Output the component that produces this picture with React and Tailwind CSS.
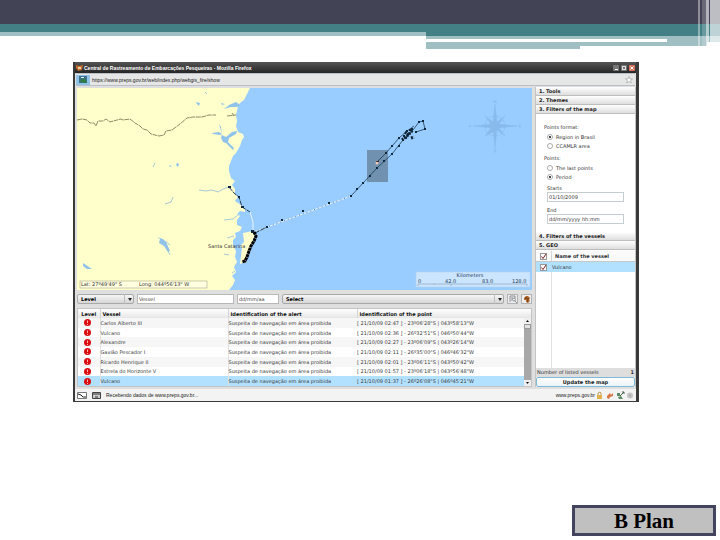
import { useState } from 'react';

const alerts = [
  { vessel: 'Carlos Alberto III', point: '[ 21/10/09 02:47 ] - 23º06\'28"S | 043º58\'13"W' },
  { vessel: 'Vulcano', point: '[ 21/10/09 02:36 ] - 26º32\'51"S | 046º50\'44"W' },
  { vessel: 'Alexandre', point: '[ 21/10/09 02:27 ] - 23º06\'09"S | 043º26\'14"W' },
  { vessel: 'Gavião Pescador I', point: '[ 21/10/09 02:11 ] - 26º35\'00"S | 046º46\'32"W' },
  { vessel: 'Ricardo Henrique II', point: '[ 21/10/09 02:01 ] - 23º06\'11"S | 043º50\'42"W' },
  { vessel: 'Estrela do Horizonte V', point: '[ 21/10/09 01:57 ] - 23º06\'18"S | 043º56\'48"W' },
  { vessel: 'Vulcano', point: '[ 21/10/09 01:37 ] - 26º26\'08"S | 046º45\'21"W' },
];

// reported positions, north-east part of the track
const track = [
  [274, 108], [280, 101], [286, 95], [293, 88], [300, 80], [307, 73],
  [315, 66], [322, 58], [326, 52], [329, 50], [327, 48], [331, 46],
  [333, 42], [335, 41], [330, 43], [322, 50], [315, 58], [309, 65],
  [300, 74], [342, 34], [346, 33], [348, 41], [339, 44],
  [190, 139], [205, 132], [226, 123], [252, 115],
];

function Header() {
  return (
    <header className="relative h-[49px]">
      <div className="h-6 bg-[#424456]" />
      <div className="h-3 bg-[#438086] flex flex-col justify-end">
        <div className="h-1 w-[426px] bg-[#a0bfc2]" />
      </div>
      <div className="ml-[426px]">
        <div className="h-[3px] bg-[#a0bfc2]" />
        <div className="h-[3px] flex justify-end">
          <div className="w-[53px] bg-[#a0bfc2]" />
        </div>
        <div className="h-1 mr-[13px] bg-[#a0bfc2]" />
        <div className="h-[3px] w-[154px] bg-[#a0bfc2]" />
      </div>
      {/* translucent stripes at the right edge */}
      <div className="absolute right-0 top-0 h-[49px] flex">
        <div className="w-[2px] h-[46px] bg-white/40" />
        <div className="w-[2px] h-[46px]" />
        <div className="w-[4px] h-[46px] bg-white/20" />
        <div className="w-[3px] bg-white/60" />
        <div className="w-px" />
        <div className="w-[10px] bg-white/65" />
      </div>
    </header>
  );
}

function Compass() {
  return (
    <g transform="translate(418 38)" fill="#88bbec" stroke="#88bbec">
      <circle r="10" fill="none" strokeWidth=".8" strokeDasharray="3 1" />
      <path d="M0-22 2-3 0 0-2-3ZM0 22 2 3 0 0-2 3ZM-22 0-3-2 0 0-3 2ZM22 0 3-2 0 0 3 2Z" strokeWidth=".4" />
      <path d="M-10-10-2-4 0 0-4-2ZM10-10 2-4 0 0 4-2ZM-10 10 2 4 0 0-4 2ZM10 10 2 4 0 0 4 2Z" strokeWidth=".4" />
      <path d="M-1-23v-3l2 3v-3M1 23h-2v1.500h2V26h-2M24-1v2h2M24-1h2M24 0h1.500M-26-1l.5 2 .5-1 .5 1 .5-2" fill="none" strokeWidth=".7" />
    </g>
  );
}

function VesselMap() {
  return (
    <svg
      className="block w-full h-[202px] bg-[#99ccff]"
      viewBox="0 0 455 202"
      preserveAspectRatio="xMinYMin slice"
      role="img"
      aria-label="Map"
      fontFamily="'DejaVu Sans', sans-serif"
    >
      {/* mainland */}
      <path
        fill="#ffffcc"
        d="M0 0H173L170 6 167 12 163 15 161 18 160 23 159 27 160 33 159 38 161 44 166 46 167 49 165 52 163 58 159 65 156 68 154 73 152 78 152 83 154 90 158 93 155 97 158 101 158 106 161 109 158 113 164 117 168 121 168 124 163 123 160 126 163 128 160 132 160 137 165 139 163 143 158 145 159 149 156 152 156 157 159 163 158 169 160 174 157 179 159 184 155 188 158 192 156 197 152 202H0Z"
      />
      {/* island */}
      <path fill="#ffffcc" d="M166 145 171 144 176 143 178 147 176 153 174 158 171 165 168 174 163 176 164 168 165 160 163 158 167 154Z" />
      {/* bays and lakes */}
      <g fill="#91c3ea">
        <path d="M152 17 159 14 163 17 160 19 154 19 147 21 151 18ZM144 15l4 1-3 1ZM119 14l4 1-1 3-2-2ZM135 45l7-1 3 2-2 1-7-1ZM142 36l2 3 1 8 4 2 6-5 5-1-1 3-7 4-1 4 6 6-1 2-7-7-3-1-2-4 1-4Z" />
        <path d="M80 149l6 2 3 3 4 9-2 1-4-6-5-3 1-4ZM6 175l3 2 6 4-5 0-4-3ZM100 75l2 1-1 3-2-2ZM92 77l3 1-2 1Z" />
      </g>
      <path
        fill="none"
        stroke="#91bdd6"
        strokeWidth=".8"
        d="M122 102l7 1 6-1 6 2 7-4 6-1M96 109l-2 5-6 2M78 75l-2 4M128 4l2 2M147 132l9-1 5-4M150 150l7-2M147 166l5 1M88 153l5 4M90 161l3 6M155 185l3-2"
      />
      {/* state border */}
      <path
        fill="none"
        stroke="#8c8c68"
        strokeWidth="1"
        strokeDasharray="5 .6"
        d="M0 32l5-1 5 1 3 3 4 0 2 3 2-5 5 0 3-2 4 3 7-2 4-1 2 1 7-1 5 4 5 3 3 3 4 1 4 4 8 2 5-1 2-4 6-1 8-6 7-6 6-1 9 0 7-2h7M150 28l9-1M155 25l2 3"
      />

      {/* selected area */}
      <rect x="290" y="62" width="21" height="32" fill="#7092b0" />

      {/* tracks */}
      <g fill="none" strokeWidth="1">
        <path stroke="#e8f4ff" d="M173 124 176 134 176 143M177 144 274 108" />
        <path stroke="#5d82a5" strokeDasharray="1 3" d="M177 144 274 108" />
        <path stroke="#1d3c55" d="M152 99l5 6 5 4 3 10 8 5M178 145l12-6" strokeDasharray="5 1" />
        <path stroke="#1d3c55" strokeWidth=".8" d="M274 108 300 80 315 66 326 52 336 42 342 34 346 33 348 41 339 44M300 74 309 65 322 50 330 43 337 38" />
        <path stroke="#000" strokeWidth="3" strokeDasharray="3 .5" d="M177 144l2 4-2 5-3 5-2 5-2 6-2 4-3 1" />
        <path stroke="#0d2030" strokeWidth="3" strokeDasharray="2 1" d="M325 52l5-4 6-6M328 44l4 3M334 50l3-1" />
      </g>
      <g fill="#10283c">
        {track.map(([x, y]) => (
          <rect key={`${x}-${y}`} x={x - 1} y={y - 1} width="2" height="2" />
        ))}
        <rect x="151" y="98" width="3" height="2" />
        <rect x="161" y="108" width="2" height="2" />
        <rect x="164" y="118" width="3" height="2" />
        <rect x="174" y="142" width="3" height="3" />
      </g>
      <circle cx="300" cy="75" r="1.500" fill="#f0c8b8" />
      <rect x="300" y="73" width="2" height="1" fill="#5a2010" />

      <Compass />

      <text x="131" y="160" fontSize="5" fill="#333">Santa Catarina</text>

      <rect x="3" y="193" width="127" height="7" fill="#ffffe0" stroke="#aaa98c" strokeWidth=".6" />
      <text x="4" y="198" fontSize="5" fill="#333">Lat: 27º49'49" S</text>
      <text x="62" y="198" fontSize="5" fill="#333">Long: 044º56'13" W</text>

      <rect x="339" y="184" width="114" height="15" fill="#cce5ff" stroke="#b3d1ec" strokeWidth=".6" />
      <g fontSize="5" fill="#1c3a58">
        <text x="393" y="189" textAnchor="middle">Kilometers</text>
        <text x="341" y="195">0</text>
        <text x="368" y="195">42.0</text>
        <text x="405" y="195">83.0</text>
        <text x="435" y="195">128.0</text>
      </g>
      <path d="M341 198v-2h109v2M357 196v1M374 196v2M412 196v1" fill="none" stroke="#86a3bd" strokeWidth=".7" />
    </svg>
  );
}

function SelectBox({ label, className }) {
  return (
    <div className={`relative ${className}`}>
      <select
        aria-label={label}
        className="block w-full h-[10px] pl-[3px] appearance-none border border-[#a9a9a9] rounded-[2px] bg-linear-to-b from-[#f6f6f6] to-[#d6d6d6] font-bold leading-[8px]"
      >
        <option>{label}</option>
      </select>
      <div className="absolute right-0 inset-y-0 w-[10px] border-l border-[#bdbdbd] flex items-center justify-center pointer-events-none">
        <svg className="w-[4px] h-[3px]" viewBox="0 0 4 3">
          <path d="M0 0h4L2 3z" fill="#222" />
        </svg>
      </div>
    </div>
  );
}

function Toolbar() {
  return (
    <div className="h-[18px] pt-1 flex gap-[3px] items-start">
      <SelectBox label="Level" className="w-[57px]" />
      <input aria-label="Vessel" placeholder="Vessel" className="w-[97px] h-[10px] px-px bg-white border border-[#b8b8b8] placeholder:text-[#444]" />
      <input aria-label="Date" placeholder="dd/mm/aa" className="w-[42px] h-[10px] px-px bg-white border border-[#b8b8b8] placeholder:text-[#444]" />
      <SelectBox label="Select" className="flex-1" />
      <button aria-label="Search" className="w-[11px] h-[10px] border border-[#b3b3b3] bg-[#eee] flex items-center justify-center">
        <svg className="w-[8px] h-[8px]" viewBox="0 0 8 8" fill="none" stroke="#8b8f96">
          <path d="M1 7V1h5v2M2 3h2M2 5h1" />
          <circle cx="5" cy="4.500" r="1.500" />
          <path d="M6 6l2 2" />
        </svg>
      </button>
      <button aria-label="Settings" className="w-[11px] h-[10px] border border-[#b3b3b3] bg-[#eee] flex items-center justify-center">
        <svg className="w-[8px] h-[8px]" viewBox="0 0 8 8">
          <path d="M1 3l2-2 2 0 2 2-1 2 1 1-2 2-2-1 0-2-2 0z" fill="#b0682c" />
          <path d="M2 3h2M5 3v2M4 6h1" stroke="#5b2c0c" strokeWidth="1" />
        </svg>
      </button>
    </div>
  );
}

function AlertTable() {
  return (
    <div className="flex flex-col border border-[#c4c4c4] bg-white text-[#3a3a3a]">
      <table className="w-full table-fixed border-collapse text-left">
        <colgroup>
          <col className="w-[22px]" />
          <col className="w-[128px]" />
          <col className="w-[129px]" />
          <col />
          <col className="w-[7px]" />
        </colgroup>
        <thead>
          <tr className="h-[9px] bg-linear-to-b from-white to-[#e6e6e6] text-[#111]">
            <th className="p-0 text-center">Level</th>
            <th className="p-0 pl-[2px] border-l border-[#d4d4d4]">Vessel</th>
            <th className="p-0 pl-[2px] border-l border-[#d4d4d4]">Identification of the alert</th>
            <th className="p-0 pl-[2px] border-l border-[#d4d4d4]">Identification of the point</th>
            <th className="p-0" />
          </tr>
        </thead>
      </table>
      <div className="flex">
        <table className="flex-1 h-[68px] table-fixed border-collapse text-left">
          <colgroup>
            <col className="w-[22px]" />
            <col className="w-[128px]" />
            <col className="w-[129px]" />
            <col />
          </colgroup>
          <tbody>
            {alerts.map((a, i) => (
              <tr key={i} className={i === 6 ? 'bg-[#b2e1ff]' : i % 2 ? 'bg-white' : 'bg-[#f6f6f6]'}>
                <td className="p-0">
                  <svg className="block ml-[6px] w-[7px] h-[7px]" viewBox="0 0 7 7">
                    <circle cx="3.500" cy="3.500" r="3.500" fill="#d90d12" />
                    <path d="M3.500 1.500v2.500M3.500 5v1" stroke="#ffb0a8" strokeWidth="1" />
                  </svg>
                </td>
                <td className="p-0 border-l border-[#e2e2e2]">{a.vessel}</td>
                <td className="p-0 border-l border-[#e2e2e2]">Suspeita de navegação em área proibida</td>
                <td className="p-0">{a.point}</td>
              </tr>
            ))}
          </tbody>
        </table>
        {/* scrollbar */}
        <div className="w-[7px] flex flex-col bg-[#a8a8a8]">
          <svg className="w-[7px] h-[6px] bg-[#eee]" viewBox="0 0 7 6"><path d="M2 4h3L3.500 2z" fill="#111" /></svg>
          <div className="h-[5px] bg-[#e2e2e2] border border-[#999]" />
          <div className="flex-1" />
          <svg className="w-[7px] h-[6px] bg-[#eee]" viewBox="0 0 7 6"><path d="M2 2h3L3.500 4z" fill="#111" /></svg>
        </div>
      </div>
    </div>
  );
}

function PanelTitle({ children }) {
  return (
    <button className="block w-full h-[9px] pl-[3px] text-left font-bold bg-linear-to-b from-white to-[#dedede] border-b border-[#bdbdbd] text-[#222]">
      {children}
    </button>
  );
}

function Radio({ name, label, checked, onChange }) {
  return (
    <label className="flex items-center gap-[3px] h-[9px] pl-[3px]">
      <input
        type="radio"
        name={name}
        checked={checked}
        onChange={onChange}
        className="appearance-none w-[6px] h-[6px] rounded-full border border-[#aaa] bg-white checked:bg-[radial-gradient(circle,#444_25%,#fff_45%)]"
      />
      {label}
    </label>
  );
}

function Check({ label }) {
  const [on, setOn] = useState(true);
  return (
    <span className="relative w-[7px] h-[7px] block">
      <input
        type="checkbox"
        aria-label={label}
        checked={on}
        onChange={() => setOn(!on)}
        className="appearance-none block w-[7px] h-[7px] border border-[#999] bg-white"
      />
      {on && (
        <svg className="absolute inset-0 w-[7px] h-[7px] pointer-events-none" viewBox="0 0 7 7">
          <path d="M1.500 3.500 3 5.500 6 1" fill="none" stroke="#7d2020" strokeWidth="1" />
        </svg>
      )}
    </span>
  );
}

function Sidebar() {
  const [area, setArea] = useState('region');
  const [points, setPoints] = useState('period');
  const field = 'block w-[77px] h-[10px] ml-[3px] px-px bg-white border border-[#c6cdd0]';

  return (
    <aside className="w-[101px] flex flex-col bg-white border-x border-[#c4c4c4] text-[#333]">
      <PanelTitle>1. Tools</PanelTitle>
      <PanelTitle>2. Themes</PanelTitle>
      <PanelTitle>3. Filters of the map</PanelTitle>
      <div className="h-[118px] pt-[9px] pl-2">
        <div className="h-[9px]">Points format:</div>
        <Radio name="area" label="Region in Brasil" checked={area === 'region'} onChange={() => setArea('region')} />
        <Radio name="area" label="CCAMLR area" checked={area === 'ccamlr'} onChange={() => setArea('ccamlr')} />
        <div className="h-[9px] mt-1">Points:</div>
        <Radio name="points" label="The last points" checked={points === 'last'} onChange={() => setPoints('last')} />
        <Radio name="points" label="Period" checked={points === 'period'} onChange={() => setPoints('period')} />
        <label htmlFor="starts" className="block h-[8px] mt-[3px] pl-[3px]">Starts</label>
        <input id="starts" defaultValue="01/10/2009" className={field} />
        <label htmlFor="end" className="block h-[8px] mt-1 pl-[3px]">End</label>
        <input id="end" placeholder="dd/mm/yyyy hh:mm" className={`${field} placeholder:text-[#333]`} />
      </div>
      <PanelTitle>4. Filters of the vessels</PanelTitle>
      <PanelTitle>5. GEO</PanelTitle>
      <div className="mt-px h-[11px] flex items-center border-b border-[#c8c8c8] bg-[#fafafa] font-bold">
        <div className="w-4 self-stretch flex items-center justify-center border-r border-[#d4d4d4]"><Check label="All vessels" /></div>
        <div className="pl-[3px]">Name of the vessel</div>
      </div>
      <div className="h-[10px] flex items-center bg-[#b2e1ff]">
        <div className="w-4 self-stretch flex items-center justify-center border-r border-transparent"><Check label="Vulcano" /></div>
        <div>Vulcano</div>
      </div>
      <div className="flex-1">
        <div className="w-4 h-full border-r border-[#e2e2e2]" />
      </div>
      <div className="h-[9px] px-px flex justify-between bg-[#dedede]">
        <span>Number of listed vessels</span>
        <span className="font-bold">1</span>
      </div>
      <button className="h-[10px] border border-[#7fb9da] rounded-[2px] bg-linear-to-b from-white to-[#eaf4f8] font-bold text-center leading-[8px] text-[#222]">
        Update the map
      </button>
    </aside>
  );
}

function BrowserWindow() {
  return (
    <section className="ml-[73px] mr-[81px] mt-[13px] border-[#3a3a3a] border-l-2 border-r-[3px] border-b bg-[#dfdfdf] font-['DejaVu_Sans',sans-serif] text-[5px] leading-[8px]">
      <div className="h-[11px] flex items-center gap-px px-px bg-linear-to-b from-[#555] to-[#262626] text-white font-['Liberation_Sans',sans-serif] font-bold">
        <svg className="w-[7px] h-[7px]" viewBox="0 0 7 7">
          <path d="M0 1l3 1 4-1-1 5-4 1-2-3z" fill="#c56b2b" />
          <path d="M2 3h3v2H2z" fill="#e9d2a8" />
        </svg>
        <span className="flex-1">Central de Rastreamento de Embarcações Pesqueiras - Mozilla Firefox</span>
        <div className="flex gap-[2px]">
          <button aria-label="Minimize" className="w-[6px] h-[6px] rounded-[1px] bg-[#777] flex items-end justify-center pb-px"><i className="block w-[3px] h-px bg-white" /></button>
          <button aria-label="Maximize" className="w-[6px] h-[6px] rounded-[1px] bg-[#777] flex items-center justify-center"><i className="block w-1 h-1 border border-[#ddd]" /></button>
          <button aria-label="Close" className="w-[6px] h-[6px] rounded-[1px] bg-[#d9715f]">
            <svg viewBox="0 0 6 6"><path d="M1.500 1.500l3 3M4.500 1.500l-3 3" stroke="#fff" /></svg>
          </button>
        </div>
      </div>
      <div className="h-[13px] m-px mt-0 flex items-center bg-[#e6e6e6] border-y border-[#b9bfc4] font-['Liberation_Sans',sans-serif]">
        <svg className="w-[14px] h-[10px] bg-[#8fc2e6]" viewBox="0 0 14 10">
          <path d="M3 1h8v7H3z" fill="#3d6f8c" />
          <path d="M4 7l2-4 2 2 1-2 2 5z" fill="#2e7d3f" />
          <path d="M5 2h3v1H5z" fill="#dff" />
        </svg>
        <input aria-label="Address" defaultValue="https://www.preps.gov.br/web/index.php/webgis_fire/show" className="flex-1 px-[2px] bg-transparent text-[#222]" />
        <svg className="w-[8px] h-[8px] mr-[2px]" viewBox="0 0 8 8">
          <path d="M4 .5l1 2.500h2.500l-2 1.500.8 2.500L4 5.500 1.700 7l.8-2.500-2-1.500H3z" fill="#fff" stroke="#9a9a9a" strokeWidth=".6" />
        </svg>
      </div>
      <div className="flex gap-[3px] pl-[2px]">
        <div className="flex-1 pt-px">
          <VesselMap />
          <Toolbar />
          <AlertTable />
        </div>
        <Sidebar />
      </div>
      <footer className="h-[12px] mt-[2px] px-[2px] flex items-center gap-[5px] bg-[#f3f3f3] font-['Liberation_Sans',sans-serif] text-[#222]">
        <svg className="w-[10px] h-[7px]" viewBox="0 0 10 7">
          <path d="M.5.5h9v6h-9z" fill="#fff" stroke="#777" />
          <path d="M1 2l3 1 2 2h3" stroke="#222" fill="none" />
        </svg>
        <svg className="w-[9px] h-[7px]" viewBox="0 0 9 7">
          <path d="M.5.5h8v6h-8z" fill="#ccc" stroke="#444" />
          <path d="M1 2h7M3 5h3" stroke="#333" />
        </svg>
        <span className="flex-1">Recebendo dados de www.preps.gov.br...</span>
        <span>www.preps.gov.br</span>
        <svg className="w-[38px] h-[9px] -ml-1" viewBox="0 0 38 9">
          <path d="M1 4h5v4H1z" fill="#e2b04c" />
          <path d="M2 4V2l2-1 1 1v2" fill="none" stroke="#bd9a5a" />
          <path d="M11 5l3-3 1 2 2-2v3l-3 1-1 2-2-1z" fill="#d87545" />
          <path d="M21 2h3v3h-3zM22 6l3-1 2 3h-4z" fill="#5e8a68" />
          <path d="M24 5l4-4M26 1h2v2" fill="none" stroke="#46644c" />
          <circle cx="34" cy="4.500" r="3" fill="#c4c4c4" />
          <circle cx="34" cy="4.500" r="1" fill="#aaa" />
        </svg>
      </footer>
    </section>
  );
}

export default function App() {
  return (
    <div className="min-h-screen flex flex-col bg-white">
      <Header />
      <BrowserWindow />
      <button className="mt-auto mb-1 mr-1 self-end w-[144px] h-[31px] border-[3px] border-[#424460] bg-[#c0c0c0] font-['Liberation_Serif',serif] font-bold text-[21px] leading-[24px] text-black">
        B Plan
      </button>
    </div>
  );
}
